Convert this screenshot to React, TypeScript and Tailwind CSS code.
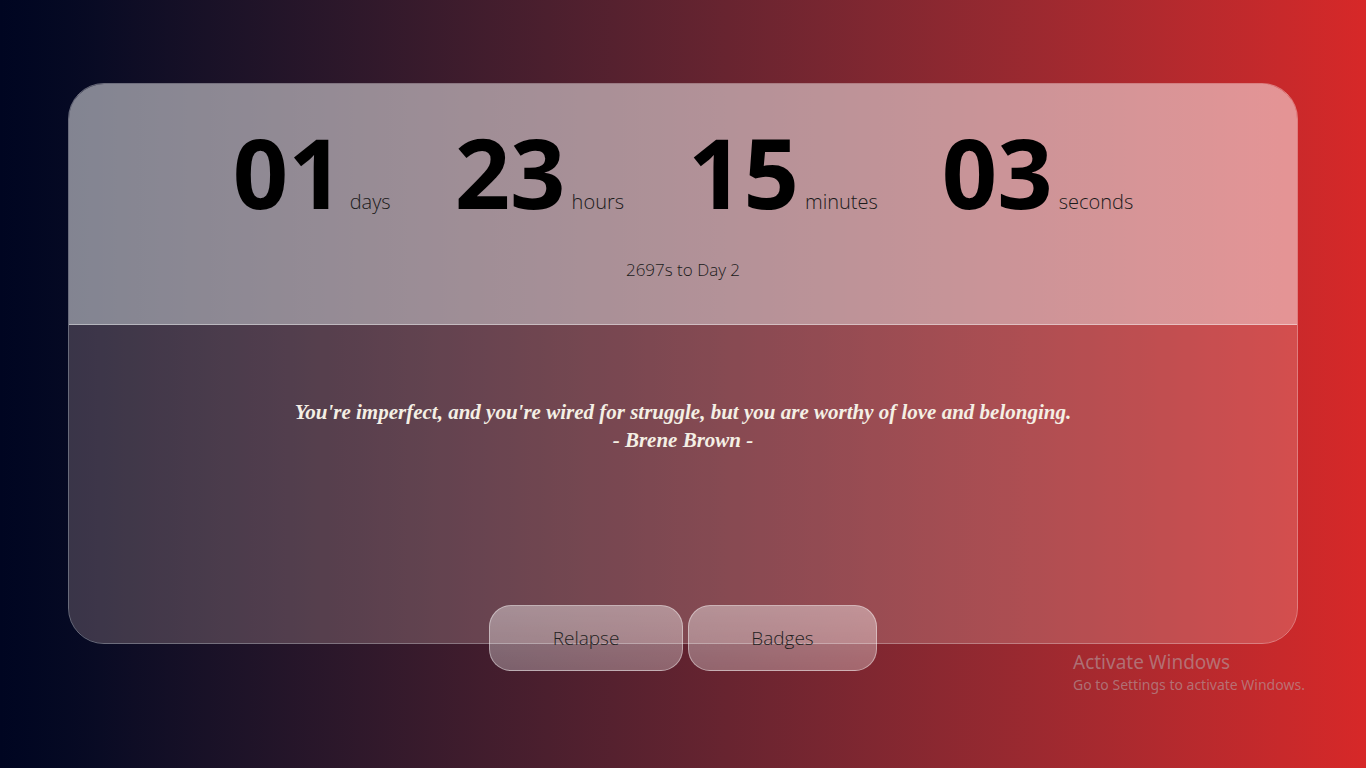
const units = [
  { value: "01", label: "days" },
  { value: "23", label: "hours" },
  { value: "15", label: "minutes" },
  { value: "03", label: "seconds" },
]

export default function App() {
  return (
    <div className="relative min-h-screen w-full bg-gradient-to-r from-[#000521] to-[#d72828] pt-[83px] px-[68px] font-['Open_Sans',sans-serif]">
      <div className="w-[1230px] h-[561px] rounded-[36px] border border-white/40 flex flex-col">
        {/* counter */}
        <div className="h-[241px] shrink-0 rounded-t-[35px] bg-white/50 border-b border-white/40 flex flex-col items-center pt-[39px]">
          <div className="flex items-baseline gap-[64px]">
            {units.map((u) => (
              <div key={u.label} className="flex items-baseline gap-[6px]">
                <span className="text-[97px] leading-none font-bold text-black">{u.value}</span>
                <span className="text-[20px] font-light text-[#1a1a1a]">{u.label}</span>
              </div>
            ))}
          </div>
          <p className="mt-[37px] text-[17px] font-light text-[#1a1a1a]">2697s to Day 2</p>
        </div>

        {/* quote */}
        <div className="flex-1 rounded-b-[35px] bg-[#f4d0cc]/22 flex flex-col items-center pt-[73px]">
          <p className="text-center text-[21px] leading-[28px] font-bold italic text-[#f4efe4] font-['Liberation_Serif',serif]">
            You're imperfect, and you're wired for struggle, but you are worthy of love and belonging.
            <br />- Brene Brown -
          </p>
          <div className="mt-auto -mb-[28px] flex gap-[5px]">
            <button className="w-[194px] h-[66px] rounded-[22px] border border-white/40 bg-gradient-to-b from-white/40 to-white/30 text-[19px] font-light text-[#1f1f1f]">
              Relapse
            </button>
            <button className="w-[189px] h-[66px] rounded-[22px] border border-white/40 bg-gradient-to-b from-white/40 to-white/30 text-[19px] font-light text-[#1f1f1f]">
              Badges
            </button>
          </div>
        </div>
      </div>

      <div className="absolute left-[1073px] top-[651px] text-[#b4a0a4]/60 font-['Noto_Sans',sans-serif]">
        <p className="text-[19px] leading-[22px]">Activate Windows</p>
        <p className="text-[14px] leading-[20px] mt-[2px]">Go to Settings to activate Windows.</p>
      </div>
    </div>
  )
}
